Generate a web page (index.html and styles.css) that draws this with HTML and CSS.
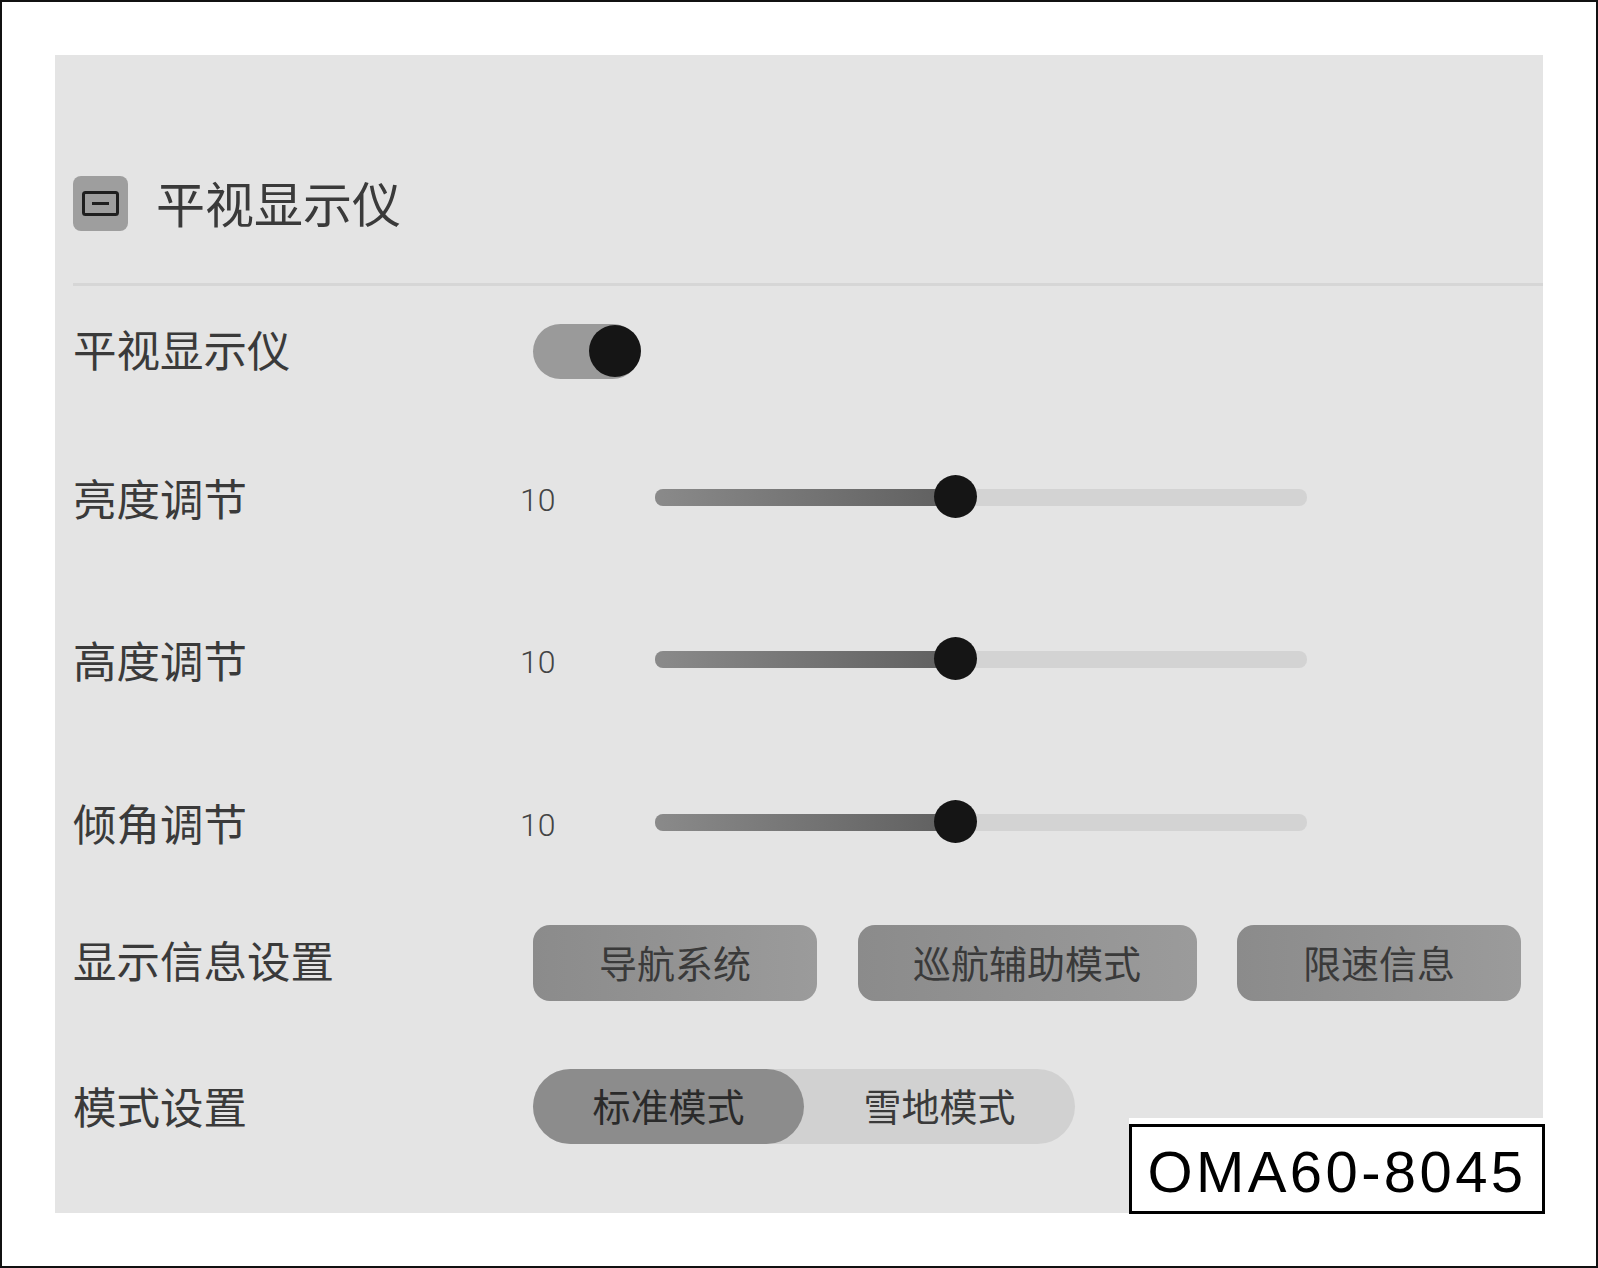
FILE: index.html
```html
<!DOCTYPE html>
<html lang="zh">
<head>
<meta charset="utf-8">
<title>平视显示仪</title>
<link rel="stylesheet" href="styles.css">
</head>
<body>
<div class="frame">
  <main class="panel">
    <header class="head">
      <span class="head-icon">
        <svg width="37" height="25" viewBox="0 0 37 25"><rect x="1.5" y="1.5" width="34" height="22" rx="2" fill="none" stroke="#1f1f1f" stroke-width="3"/><rect x="10" y="11" width="17" height="3" fill="#1f1f1f"/></svg>
      </span>
      <h1 class="head-title">平视显示仪</h1>
    </header>
    <section class="row row-toggle">
      <span class="label">平视显示仪</span>
      <span class="toggle"><span class="toggle-knob"></span></span>
    </section>
    <section class="row row-slider">
      <span class="label label-short">亮度调节</span>
      <span class="value">10</span>
      <span class="track"><span class="fill"></span><span class="knob"></span></span>
    </section>
    <section class="row row-slider">
      <span class="label label-short">高度调节</span>
      <span class="value">10</span>
      <span class="track"><span class="fill"></span><span class="knob"></span></span>
    </section>
    <section class="row row-slider">
      <span class="label label-short">倾角调节</span>
      <span class="value">10</span>
      <span class="track"><span class="fill"></span><span class="knob"></span></span>
    </section>
    <section class="row row-info">
      <span class="label label-info">显示信息设置</span>
      <div class="chips">
        <span class="chip chip-a">导航系统</span>
        <span class="chip chip-b">巡航辅助模式</span>
        <span class="chip chip-a">限速信息</span>
      </div>
    </section>
    <section class="row row-mode">
      <span class="label label-mode">模式设置</span>
      <div class="segment">
        <span class="seg seg-on">标准模式</span>
        <span class="seg seg-off">雪地模式</span>
      </div>
    </section>
    <div class="stamp">OMA60-8045</div>
  </main>
</div>
</body>
</html>
```
FILE: styles.css
```css
* { box-sizing: border-box; }
html, body { margin: 0; padding: 0; background: #fff; }
body { font-family: "Noto Sans CJK SC", "Noto Sans", sans-serif; color: #333; }

.frame {
  width: 1598px;
  height: 1268px;
  border: 2px solid #111;
  padding: 53px 53px 0 53px;
}
.panel {
  position: relative;
  width: 1488px;
  height: 1158px;
  background: #e4e4e4;
  padding-left: 18px;
}

.head {
  height: 231px;
  display: flex;
  align-items: center;
  gap: 28px;
  padding-top: 68px;
  border-bottom: 3px solid #d6d6d6;
}
.head-icon {
  width: 55px;
  height: 55px;
  border-radius: 8px;
  background: #9e9e9e;
  display: flex;
  align-items: center;
  justify-content: center;
}
.head-title { margin: 0; padding-bottom: 4px; font-size: 49px; font-weight: 400; line-height: 1; color: #3a3a3a; }

.row { display: flex; align-items: center; }
.label { width: 460px; padding-bottom: 4px; font-size: 43.5px; line-height: 1; font-weight: 400; color: #3a3a3a; flex: none; }
.label-short { width: 447px; padding: 0; }
.label-info { padding-bottom: 8px; }
.label-mode { padding-bottom: 0; }

.row-toggle { height: 130px; }
.row-slider { height: 162.5px; }
.row-info { height: 119.5px; }
.row-mode { height: 166px; }

.toggle {
  position: relative;
  width: 107px;
  height: 55px;
  border-radius: 28px;
  background: #9a9a9a;
}
.toggle-knob {
  position: absolute;
  right: -1px;
  top: 1px;
  width: 52px;
  height: 52px;
  border-radius: 50%;
  background: #151515;
}

.value {
  width: 135px;
  padding-top: 5px;
  font-family: Roboto, sans-serif;
  font-weight: 300;
  font-size: 32px;
  line-height: 1;
  color: #444;
  flex: none;
}
.track {
  position: relative;
  width: 652px;
  height: 17px;
  border-radius: 8px;
  background: #d3d3d3;
  display: block;
}
.fill {
  display: block;
  width: 300px;
  height: 100%;
  border-radius: 8px 0 0 8px;
  background: linear-gradient(90deg, #8a8a8a, #5f5f5f);
}
.knob {
  position: absolute;
  left: 279px;
  top: -14px;
  width: 43px;
  height: 43px;
  border-radius: 50%;
  background: #151515;
}

.chips { display: flex; gap: 40.5px; }
.chip {
  height: 76px;
  padding-bottom: 4px;
  border-radius: 17px;
  font-size: 38px;
  font-weight: 400;
  color: #3a3a3a;
  display: flex;
  align-items: center;
  justify-content: center;
}
.chip-a { width: 284px; background: linear-gradient(90deg, #8b8b8b, #9b9b9b); }
.chip-b { width: 339px; background: linear-gradient(90deg, #8b8b8b, #9b9b9b); }

.segment {
  display: flex;
  width: 542px;
  height: 75px;
  border-radius: 38px;
  background: #d1d1d1;
}
.seg {
  height: 75px;
  padding-bottom: 4px;
  font-size: 38px;
  font-weight: 400;
  color: #3a3a3a;
  display: flex;
  align-items: center;
  justify-content: center;
}
.seg-on { width: 271px; border-radius: 38px; background: #8c8c8c; color: #2a2a2a; }
.seg-off { width: 271px; }

.stamp {
  position: absolute;
  right: -2px;
  bottom: -1px;
  width: 416px;
  height: 90px;
  padding-top: 5px;
  border: 3px solid #000;
  outline: 6px solid #fff;
  clip-path: inset(-6px 0 0 0);
  background: #fff;
  color: #000;
  font-family: "Liberation Sans", Arial, sans-serif;
  font-size: 58px;
  letter-spacing: 3.4px;
  line-height: 1;
  display: flex;
  align-items: center;
  justify-content: center;
}
```
